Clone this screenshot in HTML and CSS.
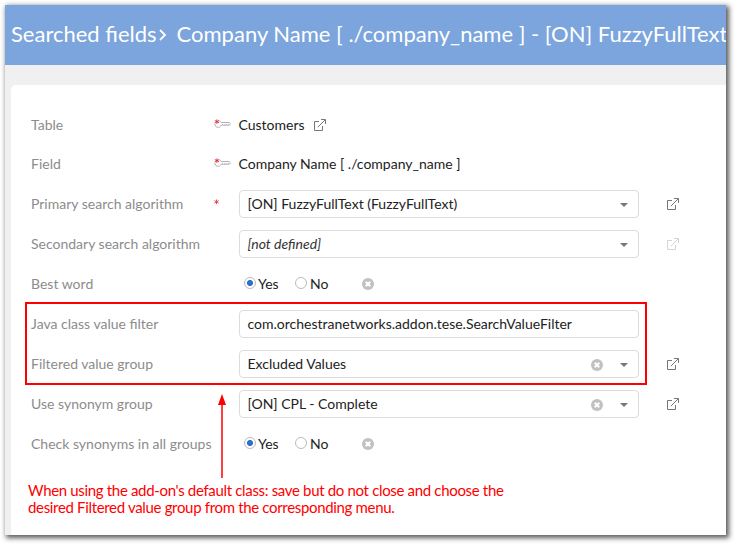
FILE: index.html
```
<!DOCTYPE html>
<html lang="en">
<head>
<meta charset="utf-8">
<title>Searched fields</title>
<link rel="stylesheet" href="styles.css">
</head>
<body>
<svg class="defs" width="0" height="0">
  <symbol id="open" viewBox="0 0 12 12"><path d="M5 2.5H.5v9h8V7M3.8 8.2 11 1M7 .5h4.5V5" fill="none" stroke="currentColor"/></symbol>
  <symbol id="clear" viewBox="0 0 12 12"><circle cx="6" cy="6" r="6" fill="#c1c1c1"/><path d="m3.7 3.7 4.6 4.6m0-4.6L3.7 8.3" stroke="#fff" stroke-width="2"/></symbol>
  <symbol id="key" viewBox="0 0 17 10"><path d="M4.5 1.7C6.5 1.8 6.5 3.5 8 3.5h7.4l1 1.2-1 1.5H7.2C6.2 8 5 8.7 3.5 8.3 1.5 8 .8 6.5 1 4.5" fill="none" stroke="#b0b0b0"/><path d="M8 5.5h7" stroke="#c4c4c4" stroke-dasharray="1 1"/><path d="M2.9.4v4.4M.8 1.5l4.2 2.3M5 1.5.8 3.8" stroke="#e8232d" stroke-width=".9"/></symbol>
  <symbol id="star" viewBox="0 0 5 6"><path d="M2.5.5v4.6M.4 1.6l4.2 2.4M4.6 1.6.4 4" stroke="#e83b43" stroke-width=".9"/></symbol>
  <symbol id="caret" viewBox="0 0 8 4"><path d="M0 0h8L4 4z" fill="#777"/></symbol>
</svg>
<main class="window">
  <header class="header"><span class="crumb">Searched fields</span><svg class="chevron" viewBox="0 0 8 12"><path d="m1 1 5 5-5 5" fill="none" stroke="#fff" stroke-width="1.8"/></svg><span class="title">Company Name [ ./company_name ] - [ON] FuzzyFullText</span></header>
  <section class="panel">
    <div class="form">
      <div class="row"><span class="label">Table</span><svg class="key"><use href="#key"/></svg><div class="value"><span>Customers</span><svg class="open"><use href="#open"/></svg></div></div>
      <div class="row short"><span class="label">Field</span><svg class="key"><use href="#key"/></svg><div class="value"><span>Company Name [ ./company_name ]</span></div></div>
      <div class="row"><span class="label">Primary search algorithm</span><svg class="star"><use href="#star"/></svg><div class="field"><span>[ON] FuzzyFullText (FuzzyFullText)</span><svg class="caret"><use href="#caret"/></svg></div><svg class="open"><use href="#open"/></svg></div>
      <div class="row"><span class="label">Secondary search algorithm</span><i></i><div class="field"><em>[not defined]</em><svg class="caret"><use href="#caret"/></svg></div><svg class="open disabled"><use href="#open"/></svg></div>
      <div class="row"><span class="label">Best word</span><i></i><div class="radios"><span class="radio on"></span><span class="yes">Yes</span><span class="radio"></span><span class="no">No</span><svg class="clear"><use href="#clear"/></svg></div></div>
      <div class="row"><span class="label">Java class value filter</span><i></i><div class="field"><span>com.orchestranetworks.addon.tese.SearchValueFilter</span></div></div>
      <div class="row"><span class="label">Filtered value group</span><i></i><div class="field"><span>Excluded Values</span><svg class="clear"><use href="#clear"/></svg><svg class="caret"><use href="#caret"/></svg></div><svg class="open"><use href="#open"/></svg></div>
      <div class="row"><span class="label">Use synonym group</span><i></i><div class="field"><span>[ON] CPL - Complete</span><svg class="clear"><use href="#clear"/></svg><svg class="caret"><use href="#caret"/></svg></div><svg class="open"><use href="#open"/></svg></div>
      <div class="row"><span class="label">Check synonyms in all groups</span><i></i><div class="radios"><span class="radio on"></span><span class="yes">Yes</span><span class="radio"></span><span class="no">No</span><svg class="clear"><use href="#clear"/></svg></div></div>
    </div>
    <p class="note">When using the add-on's default class: save but do not close and choose the<br>desired Filtered value group from the corresponding menu.</p>
  </section>
  <div class="highlight"></div>
  <svg class="arrow" viewBox="0 0 8 84"><path d="M4 9v75" stroke="#f00" stroke-width="1.5"/><path d="M4 0 8 11H0z" fill="#f00"/></svg>
</main>
</body>
</html>
```

FILE: styles.css
```
* { box-sizing: border-box; }
body { margin: 0; padding: 5px; width: 735px; height: 544px; overflow: hidden; background: #fff; color: #222; font: 14px/20px Lato, sans-serif; }
svg { display: block; flex: none; }
.defs { position: absolute; }
.window { position: relative; width: 721px; height: 530px; background: #f0f0f0; box-shadow: 2px 2px 5px 1px rgba(0, 0, 0, .65); }
.header { display: flex; align-items: center; height: 60px; padding: 0 0 3px 6px; background: #7ba5dc; color: #fff; font-size: 22px; line-height: 30px; white-space: nowrap; overflow: hidden; }
.chevron { width: 8px; height: 12px; margin: 2px 10px 0 2px; }
.panel { height: 450px; margin: 20px 0 0 6px; padding: 20px 0 0 20px; background: #fff; border-radius: 5px 0 0 0; }
.row { display: grid; grid-template-columns: 182px 26px 400px 1fr; align-items: center; height: 40px; }
.short { height: 39px; padding-bottom: 1px; }
.label { color: #8c8c8c; white-space: nowrap; }
.value > span, .field > span, .field > em, .yes, .no { white-space: nowrap; }
.key { width: 17px; height: 10px; margin: 0 0 2px 1px; }
.star { width: 5px; height: 6px; margin: 0 0 5px 1px; }
.value { display: flex; align-items: center; gap: 9px; }
.value > span { margin-left: -.5px; }
.field { display: flex; align-items: center; height: 28px; padding: 0 10px 0 7.5px; border: 1px solid #dcdcdc; border-radius: 4px; background: #fff; }
.field em { color: #333; }
.caret { width: 8px; height: 4px; margin: 2px 0 0 auto; }
.clear { width: 12px; height: 12px; }
.field .clear { margin: 1px 0 0 auto; }
.field .clear + .caret { margin-left: 17px; }
.open { width: 12px; height: 12px; color: #777; }
.row > .open { margin-left: 28px; }
.row > .disabled { color: #d5d5d5; }
.radios { display: flex; align-items: center; padding-left: 5px; }
.radio { width: 12px; height: 12px; margin-bottom: 2px; border: 1px solid #bbb; border-radius: 50%; }
.radio.on { background: radial-gradient(circle, #2d70cf 0 2.7px, #fff 3.3px); }
.yes { width: 37px; margin-left: 2px; }
.no { width: 50px; margin-left: 3px; }
.radios .clear { margin-left: 2px; }
.note { margin: 18px 0 0 -3px; color: #f00; font-size: 15px; line-height: 17px; letter-spacing: -.33px; white-space: nowrap; }
.highlight { position: absolute; left: 20px; top: 297px; width: 622px; height: 83px; border: 2px solid #f00; }
.arrow { position: absolute; left: 213px; top: 389px; width: 8px; height: 84px; }
```
